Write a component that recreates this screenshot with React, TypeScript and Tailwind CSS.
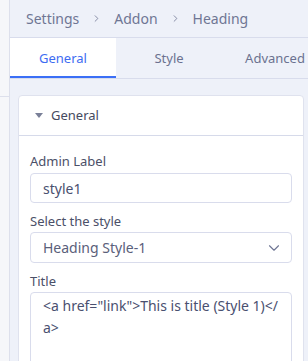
import { ChevronRight, ChevronDown } from "lucide-react";

const font = { fontFamily: '"Noto Sans", "Open Sans", sans-serif' };

const tabs = ["General", "Style", "Advanced"];

export default function App() {
  return (
    <div className="flex h-[361px] w-[308px] overflow-hidden" style={font}>
      <div className="w-[10px] shrink-0 border-r border-[#dde0ec] bg-[#f6f7fa]">
        <div className="h-[97px] border-b border-[#dde0ec]" />
      </div>
      <div className="flex min-w-0 flex-1 flex-col bg-[#eef1f9]">
        <div className="flex h-[38px] shrink-0 items-center gap-[12px] border-b border-[#d8dcec] pl-[16px] text-[14px] text-[#6f7694]">
          <span>Settings</span>
          <ChevronRight className="h-[11px] w-[11px]" strokeWidth={1.75} />
          <span>Addon</span>
          <ChevronRight className="h-[11px] w-[11px]" strokeWidth={1.75} />
          <span>Heading</span>
        </div>
        <div className="flex h-[41px] shrink-0 border-b border-[#d8dcec]">
          {tabs.map((t, i) => (
            <div
              key={t}
              className={
                i === 0
                  ? "flex w-[106px] shrink-0 items-center justify-center border-b-2 border-[#3b6ff6] bg-white pt-[4px] text-[13px] text-[#3d6cf2]"
                  : "flex w-[106px] shrink-0 items-center justify-center pt-[2px] text-[13px] text-[#6b7190]"
              }
            >
              {t}
            </div>
          ))}
        </div>
        <div className="pl-[8px] pr-[4px] pt-[16px]">
          <div className="rounded-[4px] border border-[#dfe2ee] bg-white">
            <div className="flex h-[40px] items-center gap-[8px] border-b border-[#d6daea] pl-[16px] text-[13px] text-[#454a60]">
              <svg width="8" height="5" viewBox="0 0 8 5">
                <path d="M0 0 H8 L4 5 Z" fill="#7a8098" />
              </svg>
              <span>General</span>
            </div>
            <div className="px-[11px] pt-[16px] text-[#4b5068]">
              <div className="mb-[3px] text-[13px] leading-[18px]">Admin Label</div>
              <div className="flex h-[30px] items-center rounded-[4px] border border-[#d9dcec] px-[12px] text-[14px] text-[#4a5070]">
                style1
              </div>
              <div className="mb-[2px] mt-[9px] text-[13px] leading-[18px]">Select the style</div>
              <div className="flex h-[31px] items-center justify-between rounded-[4px] border border-[#d9dcec] pl-[12px] pr-[8px] text-[14px] text-[#5a607a]">
                <span>Heading Style-1</span>
                <ChevronDown className="h-[18px] w-[18px] text-[#6f7694]" strokeWidth={1.5} />
              </div>
              <div className="mb-[2px] mt-[9px] text-[13px] leading-[18px]">Title</div>
              <div className="h-[80px] rounded-[4px] border border-[#d9dcec] px-[12px] pt-[2px] text-[14px] leading-[22px] text-[#4a5070]">
                &lt;a href="link"&gt;This is title (Style 1)&lt;/
                <br />
                a&gt;
              </div>
            </div>
          </div>
        </div>
      </div>
    </div>
  );
}
